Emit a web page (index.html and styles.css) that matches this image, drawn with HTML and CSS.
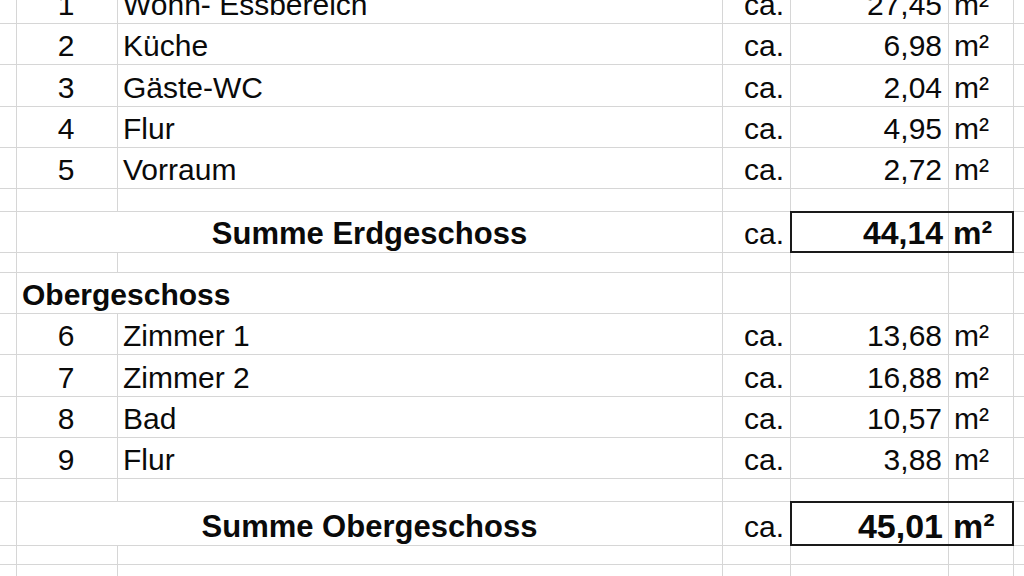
FILE: index.html
```html
<!DOCTYPE html>
<html lang="de">
<head>
<meta charset="utf-8">
<title>Flächenaufstellung</title>
<link rel="stylesheet" href="styles.css">
</head>
<body>
<div class="sheet">
  <div class="row h41 first">
    <div class="c gut"></div><div class="c num">1</div><div class="c name">Wohn- Essbereich</div><div class="c ca">ca.</div><div class="c val">27,45</div><div class="c unit">m²</div><div class="c rest"></div>
  </div>
  <div class="row h41">
    <div class="c gut"></div><div class="c num">2</div><div class="c name">Küche</div><div class="c ca">ca.</div><div class="c val">6,98</div><div class="c unit">m²</div><div class="c rest"></div>
  </div>
  <div class="row h42">
    <div class="c gut"></div><div class="c num">3</div><div class="c name">Gäste-WC</div><div class="c ca">ca.</div><div class="c val">2,04</div><div class="c unit">m²</div><div class="c rest"></div>
  </div>
  <div class="row h41">
    <div class="c gut"></div><div class="c num">4</div><div class="c name">Flur</div><div class="c ca">ca.</div><div class="c val">4,95</div><div class="c unit">m²</div><div class="c rest"></div>
  </div>
  <div class="row h41">
    <div class="c gut"></div><div class="c num">5</div><div class="c name">Vorraum</div><div class="c ca">ca.</div><div class="c val">2,72</div><div class="c unit">m²</div><div class="c rest"></div>
  </div>
  <div class="row h23">
    <div class="c gut"></div><div class="c num"></div><div class="c name"></div><div class="c ca"></div><div class="c val"></div><div class="c unit"></div><div class="c rest"></div>
  </div>
  <div class="row h41 sum">
    <div class="c gut"></div><div class="c label">Summe Erdgeschoss</div><div class="c ca">ca.</div>
    <div class="total t1"><div class="c val">44,14</div><div class="c unit">m²</div></div><div class="c rest"></div>
  </div>
  <div class="row h20">
    <div class="c gut"></div><div class="c num"></div><div class="c name"></div><div class="c ca"></div><div class="c val"></div><div class="c unit"></div><div class="c rest"></div>
  </div>
  <div class="row h41 section">
    <div class="c gut"></div><div class="c head">Obergeschoss</div><div class="c ca"></div><div class="c val"></div><div class="c unit"></div><div class="c rest"></div>
  </div>
  <div class="row h41">
    <div class="c gut"></div><div class="c num">6</div><div class="c name">Zimmer 1</div><div class="c ca">ca.</div><div class="c val">13,68</div><div class="c unit">m²</div><div class="c rest"></div>
  </div>
  <div class="row h42">
    <div class="c gut"></div><div class="c num">7</div><div class="c name">Zimmer 2</div><div class="c ca">ca.</div><div class="c val">16,88</div><div class="c unit">m²</div><div class="c rest"></div>
  </div>
  <div class="row h41">
    <div class="c gut"></div><div class="c num">8</div><div class="c name">Bad</div><div class="c ca">ca.</div><div class="c val">10,57</div><div class="c unit">m²</div><div class="c rest"></div>
  </div>
  <div class="row h41">
    <div class="c gut"></div><div class="c num">9</div><div class="c name">Flur</div><div class="c ca">ca.</div><div class="c val">3,88</div><div class="c unit">m²</div><div class="c rest"></div>
  </div>
  <div class="row h23">
    <div class="c gut"></div><div class="c num"></div><div class="c name"></div><div class="c ca"></div><div class="c val"></div><div class="c unit"></div><div class="c rest"></div>
  </div>
  <div class="row h44 sum">
    <div class="c gut"></div><div class="c label">Summe Obergeschoss</div><div class="c ca">ca.</div>
    <div class="total t2"><div class="c val">45,01</div><div class="c unit">m²</div></div><div class="c rest"></div>
  </div>
  <div class="row h19">
    <div class="c gut"></div><div class="c num"></div><div class="c name"></div><div class="c ca"></div><div class="c val"></div><div class="c unit"></div><div class="c rest"></div>
  </div>
  <div class="row h41">
    <div class="c gut"></div><div class="c num"></div><div class="c name"></div><div class="c ca"></div><div class="c val"></div><div class="c unit"></div><div class="c rest"></div>
  </div>
</div>
</body>
</html>
```
FILE: styles.css
```css
html, body {
  margin: 0;
  padding: 0;
  background: #ffffff;
  overflow: hidden;
}

.sheet {
  font-family: "Liberation Sans", Arial, sans-serif;
  font-size: 30px;
  color: #0a0a0a;
  width: 1024px;
}

.row {
  display: grid;
  grid-template-columns: 17px 101px 605px 68px 158px 65px 1fr;
  box-sizing: border-box;
  border-bottom: 1px solid #d6d6d6;
}

.first { margin-top: -17px; }

.h41 { height: 41px; }
.h42 { height: 42px; }
.h44 { height: 44px; }
.h23 { height: 23px; }
.h20 { height: 20px; }
.h19 { height: 19px; }

.c {
  box-sizing: border-box;
  border-right: 1px solid #d6d6d6;
  display: flex;
  align-items: flex-end;
  line-height: 34px;
  padding-bottom: 1px;
  white-space: nowrap;
  min-width: 0;
}

.c.rest { border-right: none; }

.num { justify-content: center; padding-right: 2px; }
.name { padding-left: 5px; }
.ca { justify-content: flex-end; padding-right: 6px; }
.val { justify-content: flex-end; padding-right: 6px; }
.unit { padding-left: 5px; }

.label {
  grid-column: span 2;
  justify-content: center;
  font-weight: bold;
  font-size: 31px;
}

.head {
  grid-column: span 2;
  padding-left: 5px;
  font-weight: bold;
}

.total {
  grid-column: span 2;
  display: grid;
  grid-template-columns: 157px 65px;
  margin: -1px 0 -1px -1px;
  border: 2px solid #1a1a1a;
  font-weight: bold;
}

.t1 { font-size: 32px; }
.t2 { font-size: 34px; }

.total .c { padding-bottom: 0; line-height: 36px; }
.total .val { padding-right: 5px; }
.total .unit { border-right: none; padding-left: 4px; }
```
